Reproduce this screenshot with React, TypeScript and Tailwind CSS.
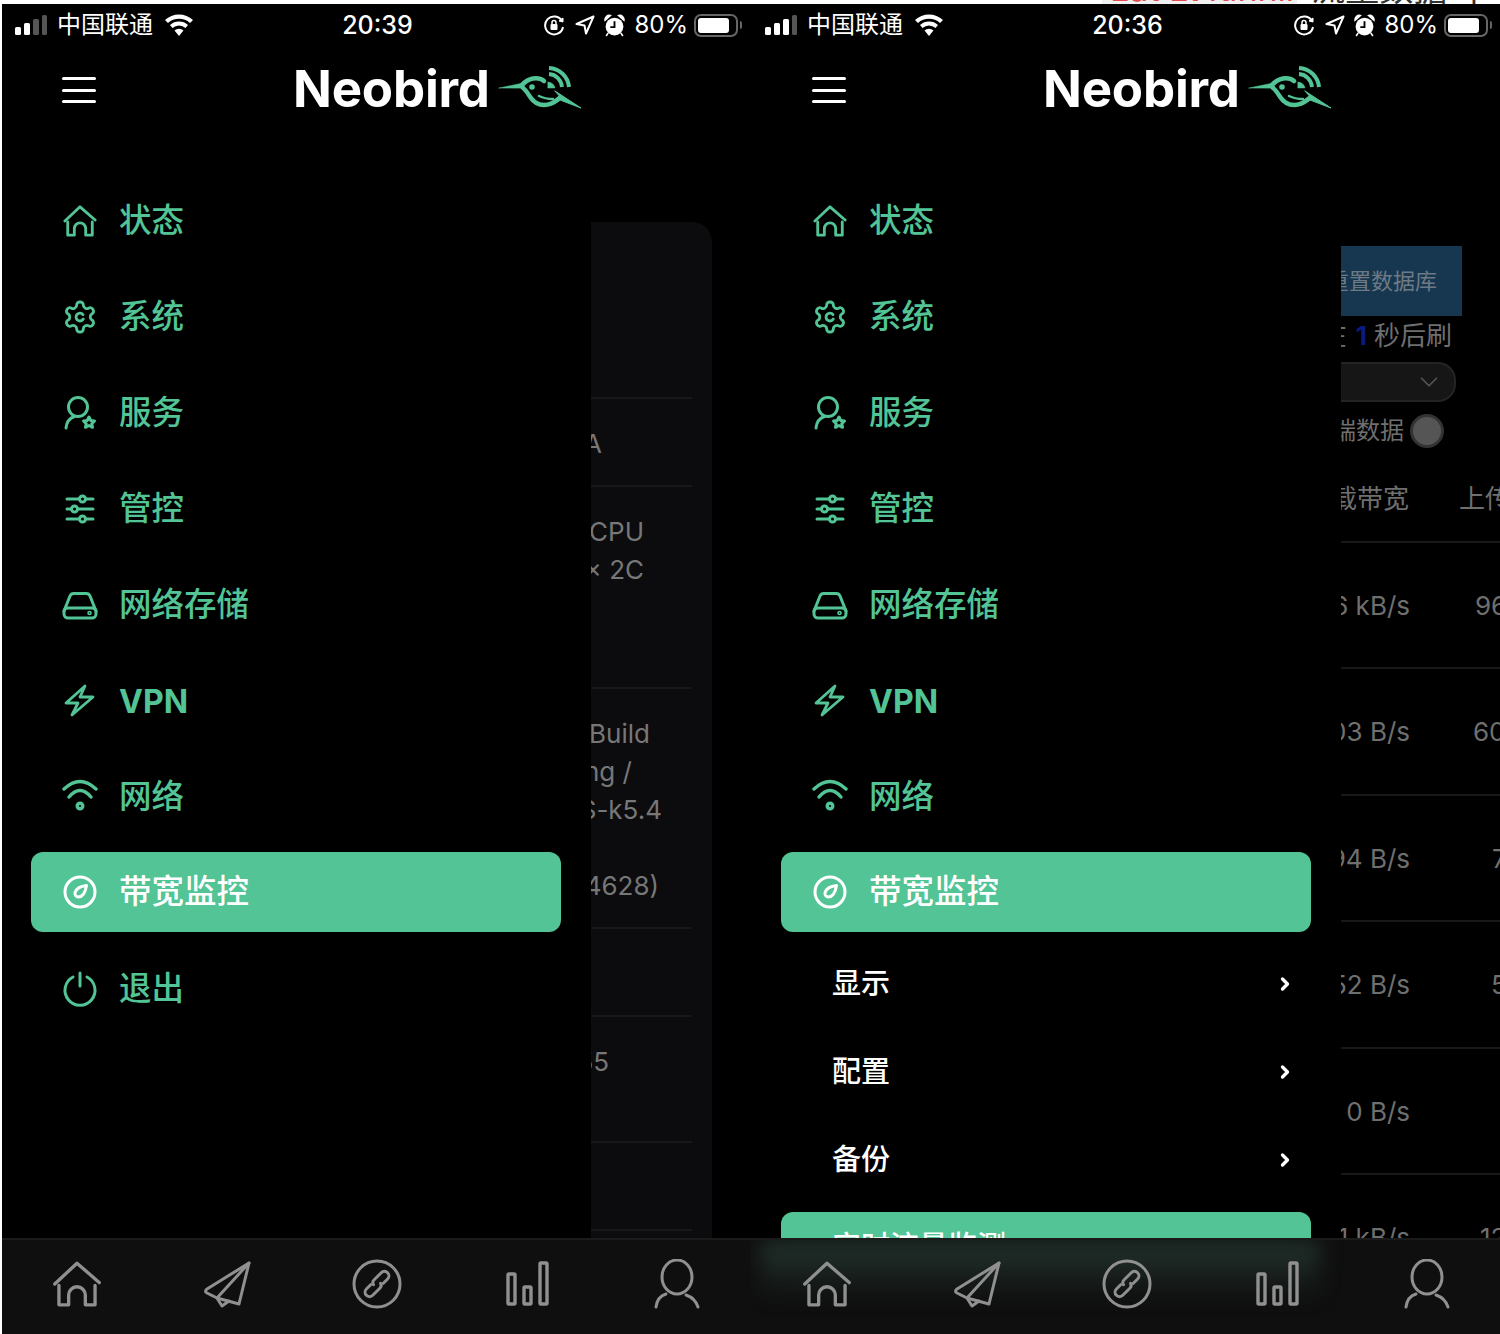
import { ChevronDown, ChevronRight } from "lucide-react"
import type { ReactNode } from "react"

const Svg = ({ size = 36, view = "0 0 36 36", width = 3, children }: { size?: number; view?: string; width?: number; children: ReactNode }) => (
  <svg width={ size } height={ size } viewBox={ view } fill="none" stroke="currentColor" strokeWidth={ width } strokeLinecap="round" strokeLinejoin="round">
    { children }
  </svg>
)

const HomeIcon = ({ size = 34, width = 3 }: { size?: number; width?: number }) => (
  <Svg size={ size } width={ width }>
    <path d="M2 18 18 3l16 14" />
    <path d="M5 19v14h7v-7a6 6 0 0 1 12 0v7h7V19" />
  </Svg>
)

const GearIcon = () => (
  <svg width="38" height="38" viewBox="0 0 24 24" fill="none" stroke="currentColor" strokeWidth="1.9" strokeLinecap="round" strokeLinejoin="round">
    <path d="M12.22 2h-.44a2 2 0 0 0-2 2v.18a2 2 0 0 1-1 1.73l-.43.25a2 2 0 0 1-2 0l-.15-.08a2 2 0 0 0-2.73.73l-.22.38a2 2 0 0 0 .73 2.73l.15.1a2 2 0 0 1 1 1.72v.51a2 2 0 0 1-1 1.74l-.15.09a2 2 0 0 0-.73 2.73l.22.38a2 2 0 0 0 2.73.73l.15-.08a2 2 0 0 1 2 0l.43.25a2 2 0 0 1 1 1.73V20a2 2 0 0 0 2 2h.44a2 2 0 0 0 2-2v-.18a2 2 0 0 1 1-1.73l.43-.25a2 2 0 0 1 2 0l.15.08a2 2 0 0 0 2.73-.73l.22-.39a2 2 0 0 0-.73-2.73l-.15-.08a2 2 0 0 1-1-1.74v-.5a2 2 0 0 1 1-1.74l.15-.09a2 2 0 0 0 .73-2.73l-.22-.38a2 2 0 0 0-2.73-.73l-.15.08a2 2 0 0 1-2 0l-.43-.25a2 2 0 0 1-1-1.73V4a2 2 0 0 0-2-2z" />
    <path d="M14 10.4a2.6 2.6 0 1 0 .2 3" />
  </svg>
)

const UserStarIcon = () => (
  <Svg>
    <circle cx="16" cy="12" r="9.500" />
    <path d="M4 33c.6-6 4-10 8.500-11.500" />
    <path d="m27 22 1.800 3.500 3.700.5-2.700 2.600.7 3.700-3.500-1.800-3.500 1.800.7-3.700-2.700-2.600 3.700-.5z" />
  </Svg>
)

const SlidersIcon = () => (
  <Svg>
    <path d="M5 8h12M24 8h7M5 18h4M16 18h15M5 28h12M24 28h7" />
    <circle cx="20.500" cy="8" r="3" />
    <circle cx="12.500" cy="18" r="3" />
    <circle cx="20.500" cy="28" r="3" />
  </Svg>
)

const DriveIcon = () => (
  <Svg>
    <path d="M2 24 8 9a4 4 0 0 1 3.700-2.500h12.600A4 4 0 0 1 28 9l6 15" />
    <path d="M2 24a4 4 0 0 1 4-3h24a4 4 0 0 1 4 3v3a4 4 0 0 1-4 4H6a4 4 0 0 1-4-4z" />
    <circle cx="27.500" cy="26" r=".8" />
  </Svg>
)

const BoltIcon = () => (
  <Svg width={ 2.8 }>
    <path d="M23 3 4 20h12l-6 12 21-18H18z" />
  </Svg>
)

const WifiIcon = () => (
  <Svg width={ 3.4 }>
    <path d="M2 10Q18-5 34 10" />
    <path d="M7 18Q18 5 29 18" />
    <circle cx="18" cy="27" r="2.800" />
  </Svg>
)

const CompassIcon = () => (
  <Svg>
    <circle cx="18" cy="18" r="15" />
    <path d="M24.500 11.500c-5 .6-10 2.500-11.400 6.800-.7 2.300.8 4.600 3 4.700 5 .1 7.500-6 8.400-11.500z" />
  </Svg>
)

const PowerIcon = () => (
  <Svg>
    <path d="M11 6a15 15 0 1 0 14 0" />
    <path d="M18 2v13" />
  </Svg>
)

const PlaneIcon = () => (
  <Svg size={ 50 } view="0 0 50 50" width={ 3 }>
    <path d="M47 4 5 30c-2 1.500-2 3 0 4l10 5 22 6z" />
    <path d="M47 4 15 39l5 8 7-5" />
  </Svg>
)

const LinkIcon = () => (
  <Svg size={ 50 } view="0 0 50 50" width={ 3 }>
    <circle cx="25" cy="25" r="23" />
    <g transform="rotate(-45 25 25)">
      <path d="M20 21h-6a4.500 4.500 0 0 0 0 9h10a4 4 0 0 0 4-3" />
      <path d="M30 29h6a4.500 4.500 0 0 0 0-9H26a4 4 0 0 0-4 3" />
    </g>
  </Svg>
)

const BarsIcon = () => (
  <Svg size={ 50 } view="0 0 50 50" width={ 3.4 }>
    <rect x="6" y="15" width="7" height="30" rx="1" />
    <rect x="22" y="28" width="7" height="17" rx="1" />
    <rect x="38" y="4" width="7" height="41" rx="1" />
  </Svg>
)

const UserIcon = () => (
  <Svg size={ 50 } view="0 0 50 50" width={ 3 }>
    <ellipse cx="25" cy="18" rx="15" ry="17" />
    <path d="M4 48c.800-6 3.500-11 10-13" />
    <path d="M34 36c6 2 10 6 12 12" />
  </Svg>
)

const BirdLogo = () => (
  <svg width="100" height="65" viewBox="0 0 100 65" fill="none" stroke="#52c495" strokeLinecap="round" strokeLinejoin="round">
    <path d="M9 33 33 28l2 5z" fill="#52c495" strokeWidth="0.5" />
    <path d="M32 30c6-7 16-9 22-4" strokeWidth="4.500" />
    <path d="M33 33c6 4 7 14 17 16.500 7 1.500 13-1 18-5" strokeWidth="4.500" />
    <path d="m65 36 26 17-21-8-7 1 6-5z" fill="#52c495" strokeWidth="1" />
    <path d="M49 41c4 2 8 3 14 3" strokeWidth="2.500" />
    <circle cx="42" cy="32" r="2.800" fill="#52c495" stroke="none" />
    <path d="M58 27a8 8 0 0 1 7 6h-7z" fill="#52c495" strokeWidth="0.5" />
    <path d="M59 19a14 14 0 0 1 13 13" strokeWidth="3.800" strokeLinecap="butt" />
    <path d="M59 13a21 21 0 0 1 20 19" strokeWidth="4" strokeLinecap="butt" />
  </svg>
)

const StatusBar = ({ time, signal }: { time: string; signal: number }) => (
  <div className="h-[42px] grid grid-cols-[1fr_auto_1fr] items-center pl-[15px] pr-[8px] text-white">
    <div className="flex items-center">
      <svg width="32" height="20" viewBox="0 0 32 20">
        <rect x="0" y="12" width="6" height="8" rx="1.500" fill={ signal > 0 ? "#fff" : "#555" } />
        <rect x="9" y="8" width="6" height="12" rx="1.500" fill={ signal > 1 ? "#fff" : "#555" } />
        <rect x="18" y="4" width="6" height="16" rx="1.500" fill={ signal > 2 ? "#fff" : "#555" } />
        <rect x="27" y="0" width="5" height="20" rx="1.500" fill="#555" />
      </svg>
      <span className="ml-[10px] text-[24px] leading-none">中国联通</span>
      <svg className="ml-[12px]" width="28" height="22" viewBox="0 0 28 22" fill="currentColor">
        <path d="M14 22 9.500 16.500a6.500 6.500 0 0 1 9 0z" />
        <path d="M7.500 14 5 11a13.500 13.500 0 0 1 18 0l-2.500 3a9.500 9.500 0 0 0-13 0z" />
        <path d="M3 9 0 6a20.500 20.500 0 0 1 28 0l-3 3A16.500 16.500 0 0 0 3 9z" />
      </svg>
    </div>
    <span className="text-[25px] leading-none font-medium -translate-x-[1px]">{ time }</span>
    <div className="flex items-center justify-end">
      <svg width="22" height="22" viewBox="0 0 22 22" fill="none" stroke="currentColor" strokeWidth="2">
        <path d="M19 7a9 9 0 1 0 1 6" />
        <path d="m16 7 4 1 0-4z" fill="currentColor" strokeWidth="1" />
        <rect x="7.500" y="10" width="7" height="6" rx="1" fill="currentColor" stroke="none" />
        <path d="M9 10V8.500a2 2 0 0 1 4 0V10" strokeWidth="1.500" />
      </svg>
      <svg className="ml-[10px]" width="20" height="20" viewBox="0 0 20 20" fill="none" stroke="currentColor" strokeWidth="2" strokeLinejoin="round">
        <path d="M18.500 1.500 1.500 9l8 1.500 1.500 8z" />
      </svg>
      <svg className="ml-[9px]" width="21" height="23" viewBox="0 0 20 22" fill="currentColor">
        <circle cx="10" cy="12" r="8.500" />
        <path d="M1 6a4 4 0 0 1 5-4.500zM19 6a4 4 0 0 0-5-4.500zM4 18l-2 3M16 18l2 3" stroke="currentColor" strokeWidth="1.500" />
        <path d="M10 7v5.500H6" stroke="#000" strokeWidth="1.800" fill="none" />
      </svg>
      <span className="ml-[9px] text-[24px] leading-none">80%</span>
      <div className="ml-[6px] w-[44px] h-[23px] rounded-[7px] border-2 border-[#666] p-[2px]">
        <div className="w-[31px] h-full rounded-[3px] bg-white" />
      </div>
      <div className="ml-[2px] w-[2px] h-[8px] rounded-r-sm bg-[#666]" />
    </div>
  </div>
)

const Header = () => (
  <div className="h-[84px] flex items-center pl-[62px]">
    <div className="mt-[4px] w-[34px] flex flex-col gap-[8.500px]">
      <div className="h-[3px] rounded-full bg-white" />
      <div className="h-[3px] rounded-full bg-white" />
      <div className="h-[3px] rounded-full bg-white" />
    </div>
    <span className="ml-[197px] w-[197px] text-[51px] leading-none font-bold text-white tracking-[-0.2px] whitespace-nowrap">Neobird</span>
    <div className="mt-[-2px] h-[65px]">
      <BirdLogo />
    </div>
  </div>
)

const NavRow = ({ icon, label, active, bold }: { icon: ReactNode; label: string; active?: boolean; bold?: boolean }) => (
  <div className={ active
    ? "ml-[31px] w-[530px] h-[80px] mt-[7px] mb-[9px] pl-[31px] flex items-center rounded-xl bg-[#52c495] text-white"
    : "ml-[31px] w-[530px] h-[96px] pl-[31px] flex items-center text-[#52c495]" }>
    <div className="w-[36px] h-[36px] flex items-center justify-center shrink-0">{ icon }</div>
    <span className={ bold ? "ml-[21px] pt-[1px] text-[32px] font-bold" : "ml-[21px] pt-[1px] text-[32.500px] font-medium" }>{ label }</span>
  </div>
)

const SubRow = ({ label }: { label: string }) => (
  <div className="ml-[31px] w-[530px] h-[88px] pl-[51px] pr-[16px] flex items-center justify-between text-white">
    <span className="text-[29px] font-medium">{ label }</span>
    <ChevronRight size={ 20 } strokeWidth={ 4 } />
  </div>
)

const Sidebar = ({ expanded }: { expanded?: boolean }) => (
  <div className="w-[591px] shrink-0 pt-[43px] bg-black">
    <NavRow icon={ <HomeIcon /> } label="状态" />
    <NavRow icon={ <GearIcon /> } label="系统" />
    <NavRow icon={ <UserStarIcon /> } label="服务" />
    <NavRow icon={ <SlidersIcon /> } label="管控" />
    <NavRow icon={ <DriveIcon /> } label="网络存储" />
    <NavRow icon={ <BoltIcon /> } label="VPN" bold />
    <NavRow icon={ <WifiIcon /> } label="网络" />
    <NavRow icon={ <CompassIcon /> } label="带宽监控" active />
    { expanded ? (
      <>
        <div className="-mt-[1px]">
          <SubRow label="显示" />
          <SubRow label="配置" />
          <SubRow label="备份" />
        </div>
        <div className="ml-[31px] w-[530px] h-[80px] mt-[8px] pl-[51px] pb-[10px] flex items-center rounded-xl bg-[#52c495] text-white text-[29px] font-medium">实时流量监测</div>
      </>
    ) : (
      <NavRow icon={ <PowerIcon /> } label="退出" />
    ) }
  </div>
)

const InfoLine = ({ text, end }: { text: string; end: string }) => (
  <div className={ `h-[38px] leading-[38px] flex justify-end overflow-hidden whitespace-nowrap ${ end }` }>{ text }</div>
)

const InfoPanel = () => (
  <div className="mt-[92px] w-[121px] h-[1016px] rounded-tr-[20px] bg-[#0c0c0e] pr-[20px] text-[26px] text-[#777]">
    <div className="h-[177px] border-b-2 border-[#18181a]" />
    <div className="h-[88px] pt-[26px] border-b-2 border-[#18181a]">
      <InfoLine text="QCA" end="pr-[90px]" />
    </div>
    <div className="h-[202px] pt-[26px] border-b-2 border-[#18181a]">
      <InfoLine text="ARM CPU" end="pr-[48px]" />
      <InfoLine text="1 x 2C" end="pr-[48px]" />
    </div>
    <div className="h-[240px] pt-[26px] border-b-2 border-[#18181a]">
      <InfoLine text="Neobird Build" end="pr-[42px]" />
      <InfoLine text="ing /" end="pr-[60px]" />
      <InfoLine text="OS-k5.4" end="pr-[30px]" />
      <div className="h-[38px]" />
      <InfoLine text="(r4628)" end="pr-[33px]" />
    </div>
    <div className="h-[88px] border-b-2 border-[#18181a]" />
    <div className="h-[126px] pt-[26px] border-b-2 border-[#18181a]">
      <InfoLine text="55" end="pr-[83px]" />
    </div>
    <div className="h-[88px] border-b-2 border-[#18181a]" />
  </div>
)

const rates = [
  { up: "6 kB/s", down: "96 kB/s", offset: "ml-[65px]" },
  { up: "103 B/s", down: "60 B/s", offset: "ml-[63px]" },
  { up: "94 B/s", down: "7 B/s", offset: "ml-[82px]" },
  { up: "52 B/s", down: "5 B/s", offset: "ml-[81px]" },
  { up: "0 B/s", down: "", offset: "ml-[65px]" },
  { up: "1 kB/s", down: "12 kB/s", offset: "ml-[70px]" },
]

const RatePanel = () => (
  <div className="flex-1 min-w-0 overflow-hidden pt-[116px] text-[#6f6f6f]">
    <div className="w-[121px] h-[70px] bg-[#173650] flex items-center justify-end pr-[25px] overflow-hidden whitespace-nowrap text-[22px] text-[#6d7a85]">重置数据库</div>
    <div className="w-[111px] h-[38px] flex items-center justify-end overflow-hidden whitespace-nowrap text-[26px]">
      <span>在</span>
      <span className="ml-[9px] font-bold text-[#0b1a80]">1</span>
      <span className="ml-[7px]">秒后刷</span>
    </div>
    <div className="mt-[8px] w-[115px] h-[40px] flex items-center justify-end pr-[10px] rounded-r-[18px] border-2 border-l-0 border-[#242424] bg-[#161616] text-[#555]">
      <ChevronDown size={ 30 } strokeWidth={ 1.4 } />
    </div>
    <div className="mt-[12px] w-[103px] h-[34px] flex items-center justify-end overflow-hidden whitespace-nowrap text-[24px]">
      <span>终端数据</span>
      <div className="ml-[6px] w-[34px] h-[34px] shrink-0 rounded-full border-[3px] border-[#333] bg-[#555]" />
    </div>
    <div className="h-[95px] pt-[36px] border-b-2 border-[#181818] flex whitespace-nowrap text-[26px] leading-[30px] overflow-hidden">
      <div className="w-[68px] shrink-0 flex justify-end overflow-hidden">载带宽</div>
      <span className="ml-[50px]">上传带宽</span>
    </div>
    { rates.map((r) => (
      <div key={ r.up } className="h-[126.400px] pt-[46px] border-b-2 border-[#181818] flex whitespace-nowrap text-[26px] leading-[34px] overflow-hidden">
        <div className="w-[69px] shrink-0 flex justify-end overflow-hidden">{ r.up }</div>
        <span className={ r.offset }>{ r.down }</span>
      </div>
    )) }
  </div>
)

const TabBar = ({ glow }: { glow?: boolean }) => (
  <div className="relative h-[96px] border-t-2 border-[#1b1b1b] bg-[#0f0f0f] grid grid-cols-[repeat(5,150px)] items-center justify-items-center pl-[2px] pb-[7px] overflow-hidden text-[#909090]">
    { glow ? <div className="absolute left-[10px] top-0 w-[560px] h-[60px] bg-linear-to-b from-[#243530] to-transparent blur-[10px]" /> : null }
    <div className="relative"><HomeIcon size={ 50 } width={ 2.4 } /></div>
    <div className="relative"><PlaneIcon /></div>
    <div className="relative"><LinkIcon /></div>
    <div className="relative"><BarsIcon /></div>
    <div className="relative"><UserIcon /></div>
  </div>
)

const Phone = ({ time, signal, expanded, topStrip, children }: { time: string; signal: number; expanded?: boolean; topStrip?: ReactNode; children: ReactNode }) => (
  <div className="w-[750px] h-[1334px] flex flex-col bg-black">
    <div className="h-[4px] bg-white overflow-hidden">{ topStrip }</div>
    <StatusBar time={ time } signal={ signal } />
    <Header />
    <div className="h-[1108px] flex overflow-hidden">
      <Sidebar expanded={ expanded } />
      { children }
    </div>
    <TabBar glow={ expanded } />
  </div>
)

export default function App() {
  return (
    <div className="relative w-[1500px] h-[1334px] flex overflow-hidden bg-white font-['Inter','Noto_Sans_CJK_SC',sans-serif]">
      <Phone time="20:39" signal={ 2 }>
        <InfoPanel />
      </Phone>
      <Phone
        time="20:36"
        signal={ 3 }
        expanded
        topStrip={
          <div className="ml-[352px] flex">
            <div className="w-[231px] h-[4px] bg-[#f0f0f0] text-[#e5484d] text-[34px] leading-[34px] overflow-hidden whitespace-nowrap">
              <div className="-mt-[28px] pl-[8px]">Lat Lt Iunning</div>
            </div>
            <div className="h-[4px] ml-[14px] text-[#333] text-[34px] leading-[34px] overflow-hidden whitespace-nowrap">
              <div className="-mt-[28px]">流量数据 丨 目</div>
            </div>
          </div>
        }
      >
        <RatePanel />
      </Phone>
      <div className="absolute left-0 top-0 w-[2px] h-full bg-white" />
    </div>
  )
}
